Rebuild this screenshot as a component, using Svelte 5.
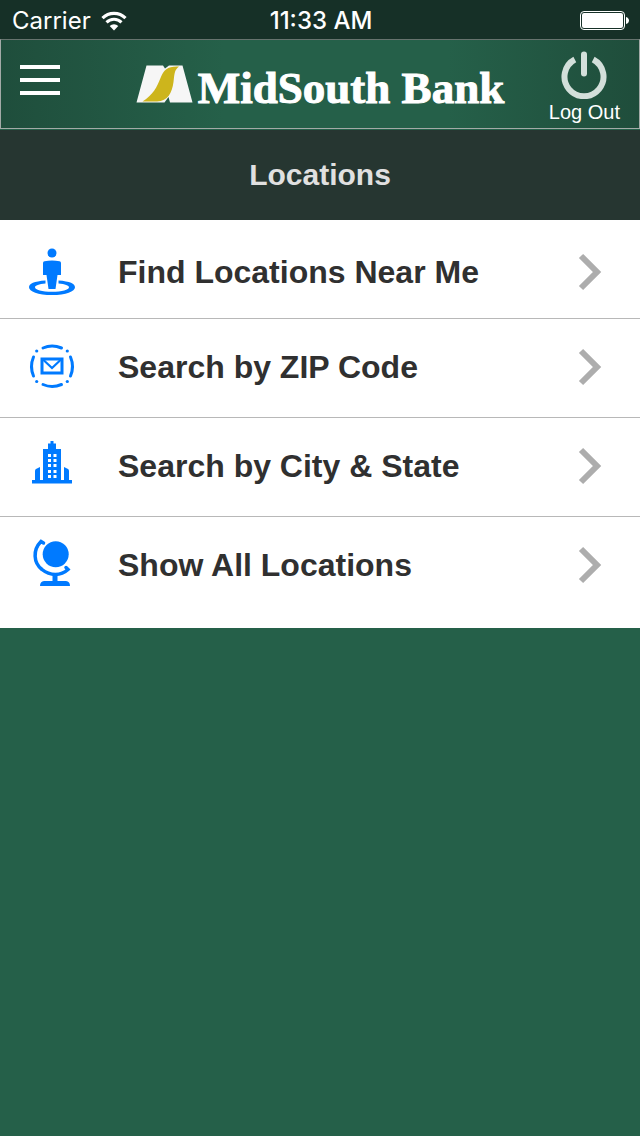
<script lang="ts">
  type Icon = 'nearby' | 'zip' | 'city' | 'globe';

  interface MenuItem {
    label: string;
    icon: Icon;
    href: string;
  }

  const items: MenuItem[] = [
    { label: 'Find Locations Near Me', icon: 'nearby', href: '#near-me' },
    { label: 'Search by ZIP Code', icon: 'zip', href: '#zip' },
    { label: 'Search by City & State', icon: 'city', href: '#city-state' },
    { label: 'Show All Locations', icon: 'globe', href: '#all' },
  ];

  const windowRows = [18, 23, 28, 34, 39];
</script>

<div class="status-bar">
  <div class="carrier">
    <span>Carrier</span>
    <svg width="26" height="20" viewBox="0 0 26 20" aria-hidden="true">
      <path d="M1.5 7.2a16.3 16.3 0 0 1 23 0" fill="none" stroke="#fff" stroke-width="3.2" />
      <path d="M5.5 11.4a10.6 10.6 0 0 1 15 0" fill="none" stroke="#fff" stroke-width="3" />
      <path d="M13 19.5l-4.3-4.4a6.2 6.2 0 0 1 8.6 0z" fill="#fff" />
    </svg>
  </div>
  <span class="time">11:33 AM</span>
  <div class="battery">
    <svg width="50" height="20" viewBox="0 0 50 20" aria-hidden="true">
      <rect x="0.5" y="0.5" width="44" height="18" rx="3.5" fill="none" stroke="#fff" />
      <rect x="2" y="2" width="41" height="15" rx="2" fill="#fff" />
      <path d="M46 6c2 .5 3 2 3 3.5s-1 3-3 3.5z" fill="#fff" />
    </svg>
  </div>
</div>

<header>
  <button class="menu-button" aria-label="Menu">
    <span></span>
    <span></span>
    <span></span>
  </button>

  <div class="logo">
    <svg width="58" height="38" viewBox="0 0 58 38" aria-hidden="true">
      <path d="M10.5 0.5H27L29 3.5L33 0.5H46.5L56.5 37.5H34L32.5 32L28.5 37.5H0.5z" fill="#f6f6f6" />
      <path
        d="M6.5 36.5C17 30 21 22 24.5 13C28 4 32 1 43 1.5C38 5 38.5 10 37.5 17C36 28 32 36 21 36.5z"
        fill="#cdb51c"
      />
    </svg>
    <span>MidSouth Bank</span>
  </div>

  <button class="logout">
    <svg width="46" height="48" viewBox="0 0 46 48" aria-hidden="true">
      <path d="M13.8 8.5a19.5 19.5 0 1 0 18.4 0" fill="none" stroke="#d3dfda" stroke-width="6" />
      <path d="M23 3.5v19" stroke="#d3dfda" stroke-width="6" stroke-linecap="round" />
    </svg>
    <span>Log Out</span>
  </button>
</header>

<h1>Locations</h1>

<nav>
  {#each items as item}
    <a href={item.href}>
      <svg class="icon" width="60" height="60" viewBox="0 0 60 60" aria-hidden="true">
        {#if item.icon === 'nearby'}
          <circle cx="30" cy="11" r="4.5" />
          <path d="M21 21q0-1.500 1.500-1.800q7.500-1.300 15 0q1.500.3 1.500 1.800v12h-3.500l-2 14h-7l-2-14h-3.500z" />
          <path d="M23.5 38.6C12 39.3 7 42 7 45.2C7 49.5 16 53 30 53S53 49.5 53 45.2C53 42 48 39.3 36.500 38.600V41.500C43 42 47 43.500 47 45.200C47 47.800 40 49.800 30 49.800S13 47.800 13 45.200C13 43.500 17 42 23.500 41.500z" />
        {:else if item.icon === 'zip'}
          <g class="lines">
            <path d="M21 11q9-4 18.5 0M21 47.5q9 4 18.5 0M11.5 20q-4 9.5 0 19M48.5 20q4 9.5 0 19" stroke-width="3" />
            <path d="M20 22h20v14H20z" stroke-width="3" />
            <path d="M22 23.5l8 7.5 8-7.5" stroke-width="2.2" />
          </g>
          <circle cx="14.7" cy="14" r="1.6" />
          <circle cx="45.3" cy="14" r="1.6" />
          <circle cx="14.7" cy="44.5" r="1.6" />
          <circle cx="45.3" cy="44.5" r="1.6" />
        {:else if item.icon === 'city'}
          <path d="M28.5 5h3v2.500H34V13h5v31h3V31l4 2q1 .5 1 2v9h3v3.500H10V44h3v-9q0-1.500 1-2l4-2v13h3V13h5V7.500h2.500z" />
          {#each windowRows as y}
            <path class="window" d="M26 {y}h3v3h-3zM31.5 {y}h3v3h-3z" />
          {/each}
        {:else}
          <circle cx="33.7" cy="19.3" r="13" />
          <path class="lines" d="M21.5 8l-2.500-1.500C10.500 15 11.500 28 20 34.500C28 41 39 41 46 34.500l-2-2" stroke-width="3.5" />
          <path d="M30.5 39h5v7H44q4 .5 4 5H18q0-4.500 4-5h8.500z" />
        {/if}
      </svg>
      <span class="label">{item.label}</span>
      <svg class="chevron" width="24" height="40" viewBox="0 0 24 40" aria-hidden="true">
        <path d="M3 4L19 20L3 36" fill="none" stroke="#adadad" stroke-width="6" />
      </svg>
    </a>
  {/each}
</nav>

<style>
  :global(body) {
    margin: 0;
    background: #256049;
    font-family: 'Liberation Sans', Arial, sans-serif;
  }

  .status-bar {
    display: grid;
    grid-template-columns: 1fr auto 1fr;
    align-items: center;
    box-sizing: border-box;
    height: 39px;
    padding: 2px 10px 0 12px;
    background: #163027;
    color: #fff;
    font-family: Inter, sans-serif;
    font-size: 24px;
    line-height: 30px;
  }

  .carrier {
    display: flex;
    align-items: center;
    gap: 10px;
  }

  .time {
    font-weight: 500;
  }

  .battery {
    display: flex;
    justify-content: flex-end;
  }

  header {
    display: grid;
    grid-template-columns: 1fr auto 1fr;
    align-items: center;
    box-sizing: border-box;
    height: 90px;
    padding: 0 19px;
    border: 1px solid #a3aaa7;
    border-top-color: #66736e;
    background: linear-gradient(90deg, #1f4e3c, #256049 35%, #256049 70%, #1f4d3b);
  }

  button {
    padding: 0;
    border: 0;
    background: none;
    color: #fff;
    font: inherit;
    cursor: pointer;
  }

  .menu-button {
    display: flex;
    flex-direction: column;
    gap: 9px;
    width: 40px;
    margin-bottom: 8px;
  }

  .menu-button span {
    height: 4px;
    background: #fff;
  }

  .logo {
    display: flex;
    align-items: baseline;
    gap: 4px;
    padding-top: 8px;
    color: #fff;
    font-family: 'Liberation Serif', serif;
    font-size: 45px;
    font-weight: 700;
    line-height: 60px;
    white-space: nowrap;
    -webkit-text-stroke: 1px #fff;
  }

  .logout {
    display: flex;
    flex-direction: column;
    align-items: center;
    justify-self: end;
    padding-top: 8px;
    font-size: 20px;
    line-height: 26px;
  }

  h1 {
    margin: 1px 0 0;
    background: #263631;
    color: #e0e0e0;
    font-size: 30px;
    font-weight: 700;
    line-height: 90px;
    text-align: center;
  }

  nav {
    background: #fff;
  }

  a {
    display: flex;
    align-items: center;
    padding: 18px 38px 20px 22px;
    border-bottom: 1px solid #b8b8b8;
    color: #303030;
    text-decoration: none;
  }

  a:first-child {
    padding-top: 22px;
    padding-bottom: 16px;
  }

  a:last-child {
    padding-bottom: 33px;
    border-bottom: 0;
  }

  .icon {
    flex-shrink: 0;
    margin-right: 36px;
    fill: #007aff;
  }

  .lines {
    fill: none;
    stroke: #007aff;
    stroke-linecap: round;
  }

  .window {
    fill: #fff;
  }

  .label {
    flex: 1;
    font-size: 32px;
    font-weight: 700;
    line-height: 40px;
  }

  .chevron {
    flex-shrink: 0;
  }
</style>
